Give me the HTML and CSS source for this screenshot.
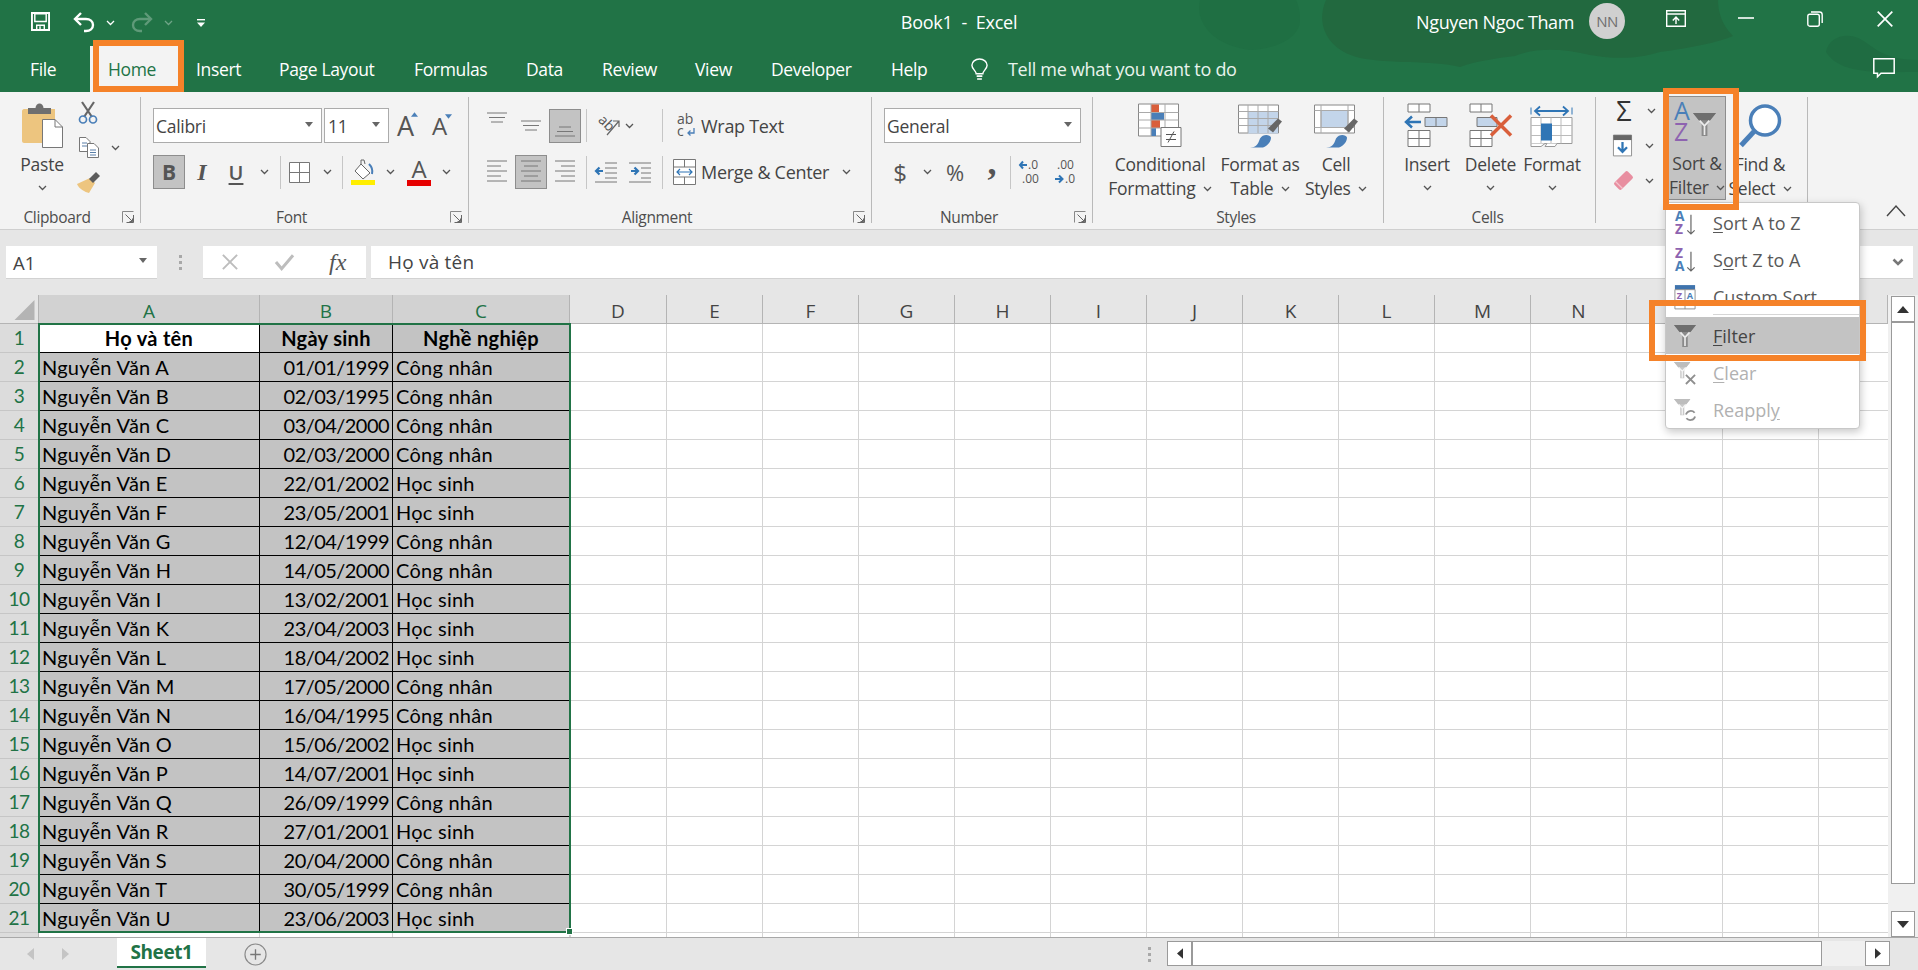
FILE: index.html
```html
<!DOCTYPE html>
<html lang="vi">
<head>
<meta charset="utf-8">
<title>Book1 - Excel</title>
<link rel="stylesheet" href="styles.css">
</head>
<body>
<svg class="defs" width="0" height="0">
  <symbol id="chev" viewBox="0 0 9 6"><path d="M1 1l3.500 3.500L8 1" fill="none" stroke="#555" stroke-width="1.300"/></symbol>
  <symbol id="launch" viewBox="0 0 12 12"><path d="M.5 11.500V.5h11" fill="none" stroke="#888"/><path d="M11.500 4v7.500H4.500M3.500 3.500l7 7M7.500 10.500h3v-3" fill="none" stroke="#666"/></symbol>
  <symbol id="drop" viewBox="0 0 10 6"><path d="M1 0h8L5 5z" fill="#666"/></symbol>
  <symbol id="funnel" viewBox="0 0 24 24"><path d="M0 0h24L15 11v13H9V11z" fill="#8a8a8a"/><path d="M0 0h24l-6 7.500H6z" fill="#6e6e6e"/><path d="M7 8l5 5.500M17 8l-5 5.500V23" fill="none" stroke="#ececec" stroke-width="1.800"/></symbol>
</svg>

<div class="app">
  <header class="titlebar">
    <svg class="blobs" viewBox="0 0 768 92"><path d="M50 0C45 20 60 45 100 50c20 0 50-10 50-30 0-10-2-15-4-20z" fill="#1f6f43"/><path d="M676 52c2-14 19-20 32-14 14 6 22 22 60 22v12c-38 0-78 3-92-20z" fill="#1f6c42"/><path d="M176 0C165 25 178 50 210 58c30 6 70 2 100 9 20-7 40-9 55-11 20-8 45-8 75-1 30 5 50 3 70-3 30-4 60-10 73-16-11-11-15-24-15-36z" fill="#22693f"/></svg>
    <div class="qat-row">
      <div class="qat">
        <svg class="i-save" viewBox="0 0 20 20"><path d="M1 1h18v18H1z" fill="none" stroke="#fff" stroke-width="2"/><path d="M4 2h12v8H4z" fill="none" stroke="#fff" stroke-width="1.500"/><path d="M6 19v-5h8v5M9.500 15v4" fill="none" stroke="#fff" stroke-width="1.500"/></svg>
        <svg class="i-undo" viewBox="0 0 22 20"><path d="M8 1L2 7l6 6" fill="none" stroke="#fff" stroke-width="2.400"/><path d="M3 7h10c4 0 7 2.500 7 6s-3 6-7 6h-2" fill="none" stroke="#fff" stroke-width="2.400"/></svg>
        <svg class="chev c-undo"><use href="#chev"/></svg>
        <svg class="i-redo" viewBox="0 0 22 20"><path d="M14 1l6 6-6 6" fill="none" stroke="#5f9a79" stroke-width="2.400"/><path d="M19 7H9c-4 0-7 2.500-7 6s3 6 7 6h2" fill="none" stroke="#5f9a79" stroke-width="2.400"/></svg>
        <svg class="chev c-redo dim"><use href="#chev"/></svg>
        <svg class="i-more" viewBox="0 0 10 9"><path d="M1 .7h8" stroke="#fff" stroke-width="1.400"/><path d="M1 3.500h8L5 8z" fill="#fff"/></svg>
      </div>
      <div class="doc-title">Book1 &nbsp;-&nbsp; Excel</div>
      <div class="win">
        <span class="user">Nguyen Ngoc Tham</span>
        <span class="avatar">NN</span>
        <svg class="i-display" viewBox="0 0 20 17"><path d="M.7.700h18.600v15.600H.7zM.7 4h18.600" fill="none" stroke="#fff" stroke-width="1.400"/><path d="M10 14V7.500M6.800 10.500L10 7l3.200 3.500" fill="none" stroke="#fff" stroke-width="1.400"/></svg>
        <svg class="i-min" viewBox="0 0 16 2"><path d="M0 1h16" stroke="#fff" stroke-width="1.600"/></svg>
        <svg class="i-restore" viewBox="0 0 16 16"><rect x=".8" y="3.200" width="11.500" height="12" rx="2" fill="none" stroke="#fff" stroke-width="1.400"/><path d="M4 1h8.500c1.500 0 2.700 1.200 2.700 2.700V12" fill="none" stroke="#fff" stroke-width="1.400"/></svg>
        <svg class="i-close" viewBox="0 0 16 16"><path d="M.7.700l14.600 14.600M15.300.7L.7 15.300" stroke="#fff" stroke-width="1.700"/></svg>
      </div>
    </div>
    <nav class="tabs-row">
      <span class="tab">File</span>
      <span class="tab active">Home</span>
      <span class="tab">Insert</span>
      <span class="tab">Page Layout</span>
      <span class="tab">Formulas</span>
      <span class="tab">Data</span>
      <span class="tab">Review</span>
      <span class="tab">View</span>
      <span class="tab">Developer</span>
      <span class="tab">Help</span>
      <svg class="i-bulb" viewBox="0 0 20 24"><path d="M6.500 16.500c0-3-4.500-5-4.500-9C2 4 5.500 1 10 1s8 3 8 6.500c0 4-4.500 6-4.500 9z" fill="none" stroke="#fff" stroke-width="1.500"/><path d="M7 19h6M7.500 22h5" stroke="#fff" stroke-width="1.800"/></svg>
      <span class="tell">Tell me what you want to do</span>
      <svg class="i-comment" viewBox="0 0 22 20"><path d="M.8.800h20.400v14.400H8l-3.500 3.500v-3.500H.8z" fill="none" stroke="#fff" stroke-width="1.500"/></svg>
    </nav>
  </header>

  <section class="ribbon">
    <div class="group">
      <div class="body clip">
        <div class="big paste">
          <svg class="i-paste" viewBox="0 0 41 45"><path d="M2 6h31v34H2c-1 0-2-1-2-2V8c0-1 1-2 2-2z" fill="#edc57f"/><path d="M6 11V5h7.500c0-2.500 2-4.500 4-4.500s4 2 4 4.500H29v6z" fill="#6f6f6f"/><path d="M20.500 16.500H33l7.500 7.500v20.500h-20z" fill="#fff" stroke="#777"/><path d="M33 16.500V24h7.500" fill="none" stroke="#777"/></svg>
          <span>Paste</span>
          <svg class="chev"><use href="#chev"/></svg>
        </div>
        <div class="clip-tools">
          <div class="tool"><svg class="i-cut" viewBox="0 0 20 22"><path d="M4 0l10 15M16 0L6 15" stroke="#666" stroke-width="2.200" fill="none"/><circle cx="5" cy="17.500" r="3.500" fill="none" stroke="#4a7fb8" stroke-width="1.700"/><circle cx="15" cy="17.500" r="3.500" fill="none" stroke="#4a7fb8" stroke-width="1.700"/></svg></div>
          <div class="tool"><svg class="i-copy" viewBox="0 0 20 21"><path d="M.5.500h6.500l4 4v10H.5z" fill="#fff" stroke="#777"/><path d="M8.500 6.500h6.500l4.500 4.500v9.500h-11z" fill="#fff" stroke="#777"/><path d="M3 6h5M3 9h5M11 13h6M11 15.500h6M11 18h6" stroke="#5a7fa8"/></svg><svg class="chev c-copy"><use href="#chev"/></svg></div>
          <div class="tool"><svg class="i-brush" viewBox="0 0 23 22"><path d="M13 6l5 5-6 10C8 20 2 17 0 12z" fill="#edc57f"/><path d="M12 7l7-7 4 4-7 7z" fill="#5c5c5c"/></svg></div>
        </div>
      </div>
      <div class="foot launcher"><span class="label">Clipboard</span><svg class="launch"><use href="#launch"/></svg></div>
    </div>

    <div class="group">
      <div class="body">
        <div class="row r1 pad">
          <div class="select w-font"><span>Calibri</span><svg class="drop"><use href="#drop"/></svg></div>
          <div class="select w-size"><span>11</span><svg class="drop"><use href="#drop"/></svg></div>
          <span class="fa grow">A<svg viewBox="0 0 8 5"><path d="M0 5h8L4 0z" fill="#4a7fb8"/></svg></span>
          <span class="fa shrink">A<svg viewBox="0 0 8 5"><path d="M0 0h8L4 5z" fill="#4a7fb8"/></svg></span>
        </div>
        <div class="row r2 pad">
          <span class="btn on b">B</span>
          <span class="btn i">I</span>
          <span class="btn u">U</span>
          <span class="cbox w22"><svg class="chev"><use href="#chev"/></svg></span>
          <span class="sep ml5"></span>
          <svg class="i-border ml8" viewBox="0 0 21 21"><path d="M.5.500h20v20H.5zM10.500.500v20M.5 10.500h20" fill="#fff" stroke="#777"/></svg>
          <span class="cbox w22 ml6"><svg class="chev"><use href="#chev"/></svg></span>
          <span class="sep ml4"></span>
          <svg class="i-fill ml8" viewBox="0 0 24 26"><path d="M10 5l9 9-7 6-8-8z" fill="#fff" stroke="#666"/><path d="M10 5V1l3 0 1 4" fill="none" stroke="#666"/><path d="M18 5c3 3 4 6 3 10" fill="none" stroke="#4a7fb8" stroke-width="2"/><path d="M0 21h24v5H0z" fill="#ffee00"/></svg>
          <span class="cbox w22 ml4"><svg class="chev"><use href="#chev"/></svg></span>
          <span class="fcolor ml6">A</span>
          <span class="cbox w22 ml4"><svg class="chev"><use href="#chev"/></svg></span>
        </div>
      </div>
      <div class="foot launcher"><span class="label">Font</span><svg class="launch"><use href="#launch"/></svg></div>
    </div>

    <div class="group">
      <div class="body">
        <div class="row r1 pad">
          <span class="abox"><svg viewBox="0 0 22 16" class="i-al up"><path d="M1 1h20M3 5.500h16M5 10h12" stroke="#777"/></svg></span>
          <span class="abox"><svg viewBox="0 0 22 16" class="i-al"><path d="M1 3h20M3 7.500h16M5 12h12" stroke="#777"/></svg></span>
          <span class="abox on"><svg viewBox="0 0 22 16" class="i-al down"><path d="M5 5h12M3 9.500h16M1 14h20" stroke="#777"/></svg></span>
          <span class="sep ml5"></span>
          <svg class="i-orient ml9" viewBox="0 0 26 26"><text x="1" y="15" transform="rotate(45 10 12)" class="mini-text">ab</text><path d="M11 22L23 8M17 8h6v6" fill="none" stroke="#666" stroke-width="1.200"/></svg>
          <span class="cbox w14"><svg class="chev"><use href="#chev"/></svg></span>
          <span class="sep ml26"></span>
          <svg class="i-wrap ml14" viewBox="0 0 18 26"><text x="0" y="11" class="mini-text">ab</text><text x="0" y="23" class="mini-text">c</text><path d="M17 15v5h-6M13.500 17.500L11 20l2.500 2.500" fill="none" stroke="#4a7fb8" stroke-width="1.300"/></svg>
          <span class="txt ml6">Wrap Text</span>
        </div>
        <div class="row r2 pad">
          <span class="abox"><svg viewBox="0 0 22 26" class="i-alh"><path d="M1 2h20M1 7h14M1 12h20M1 17h14M1 22h20" stroke="#777"/></svg></span>
          <span class="abox on"><svg viewBox="0 0 22 26" class="i-alh"><path d="M1 2h20M4 7h14M1 12h20M4 17h14M1 22h20" stroke="#777"/></svg></span>
          <span class="abox"><svg viewBox="0 0 22 26" class="i-alh"><path d="M1 2h20M7 7h14M1 12h20M7 17h14M1 22h20" stroke="#777"/></svg></span>
          <span class="sep ml5"></span>
          <svg class="i-indent ml8" viewBox="0 0 22 24"><path d="M10 3h12M10 8h12M10 13h12M10 18h12M0 22h22" stroke="#777"/><path d="M8 11H1M4.500 7.500L1 11l3.500 3.500" fill="none" stroke="#2f75b5" stroke-width="2.200"/></svg>
          <svg class="i-indent ml12" viewBox="0 0 22 24"><path d="M0 3h22M12 8h10M12 13h10M12 18h10M0 22h22" stroke="#777"/><path d="M2 11h7M5.500 7.500L9 11l-3.500 3.500" fill="none" stroke="#2f75b5" stroke-width="2.200"/></svg>
          <span class="sep ml11"></span>
          <svg class="i-merge ml10" viewBox="0 0 23 26"><path d="M.5.500h22v25H.5zM.5 8h22M.5 18h22M11.500.500V8M11.500 18v7.500" fill="#fff" stroke="#777"/><path d="M4 13h15M7 10l-3 3 3 3M16 10l3 3-3 3" fill="none" stroke="#2f75b5" stroke-width="1.200"/></svg>
          <span class="txt w-merge ml5">Merge &amp; Center</span>
          <span class="cbox w14"><svg class="chev"><use href="#chev"/></svg></span>
        </div>
      </div>
      <div class="foot launcher"><span class="label">Alignment</span><svg class="launch"><use href="#launch"/></svg></div>
    </div>

    <div class="group">
      <div class="body">
        <div class="row r1 pad">
          <div class="select w-fmt"><span>General</span><svg class="drop"><use href="#drop"/></svg></div>
        </div>
        <div class="row r2 pad">
          <span class="nbtn w32 dollar">$</span>
          <span class="cbox w14 ml4"><svg class="chev"><use href="#chev"/></svg></span>
          <span class="nbtn w34 ml4 pct">%</span>
          <span class="nbtn w28 ml3 comma">,</span>
          <span class="sep ml7"></span>
          <svg class="i-dec ml8" viewBox="0 0 22 26"><text x="9" y="10" class="dec-text">.0</text><text x="3" y="24" class="dec-text">.00</text><path d="M8 6H1M4 2.500L1 6l3 3.500" fill="none" stroke="#2f75b5" stroke-width="2"/></svg>
          <svg class="i-dec ml13" viewBox="0 0 22 26"><text x="3" y="10" class="dec-text">.00</text><text x="11" y="24" class="dec-text">.0</text><path d="M1 20h7M5 16.500L8.500 20 5 23.500" fill="none" stroke="#2f75b5" stroke-width="2"/></svg>
        </div>
      </div>
      <div class="foot launcher"><span class="label">Number</span><svg class="launch"><use href="#launch"/></svg></div>
    </div>

    <div class="group">
      <div class="body flexrow pl15">
        <div class="big w104">
          <svg class="i-big" viewBox="0 0 44 44"><path d="M.5.500h40v32H.5z" fill="#fff" stroke="#888"/><path d="M13 1h8v8h-8z" fill="#d95f3b"/><path d="M13 9h13v7.500H13z" fill="#4a7fb8"/><path d="M13 16.500h9v8h-9z" fill="#d95f3b"/><path d="M13 24.500h5v8h-5z" fill="#4a7fb8"/><path d="M.5 9h40M.5 16.500h40M.5 24.500h40M13 .5v32M27 .5v32" stroke="#aaa" fill="none"/><path d="M23 24h20v19H23z" fill="#fff" stroke="#777"/><path d="M28 31h10M28 36h10M30 39l6-11" stroke="#555" fill="none"/></svg>
          <span>Conditional</span>
          <span>Formatting <svg class="chev inl"><use href="#chev"/></svg></span>
        </div>
        <div class="big w80 ml8">
          <svg class="i-big" viewBox="0 0 44 44"><path d="M.5 1.500h40v28H.5z" fill="#fff" stroke="#888"/><path d="M10 8h30v22H10z" fill="#c3d5ea"/><path d="M.5 8h40M.5 15h40M.5 22h40M10 1.500v28M20 1.500v28M30 1.500v28" stroke="#aaa" fill="none"/><path d="M30 25l10-10 4 3-9 11z" fill="#666"/><path d="M12 44c6 0 8-3 10-9 3-5 10-4 11-1 0 4-3 8-8 10z" fill="#4a7fb8"/></svg>
          <span>Format as</span>
          <span>Table <svg class="chev inl"><use href="#chev"/></svg></span>
        </div>
        <div class="big w64 ml4">
          <svg class="i-big" viewBox="0 0 44 44"><path d="M.5 1.500h40v28H.5z" fill="#fff" stroke="#888"/><path d="M7 7h27v17H7z" fill="#c3d5ea" stroke="#aaa"/><path d="M.5 7h40M.5 24h40M7 1.500v28M34 1.500v28" stroke="#aaa" fill="none"/><path d="M30 25l10-10 4 3-9 11z" fill="#666"/><path d="M12 44c6 0 8-3 10-9 3-5 10-4 11-1 0 4-3 8-8 10z" fill="#4a7fb8"/></svg>
          <span>Cell</span>
          <span>Styles <svg class="chev inl"><use href="#chev"/></svg></span>
        </div>
      </div>
      <div class="foot"><span class="label">Styles</span></div>
    </div>

    <div class="group">
      <div class="body flexrow pl12">
        <div class="big w62">
          <svg class="i-big" viewBox="0 0 44 44"><path d="M3 .5h22v8H3zM14 .5v8M3 27h22v16H3zM14 27v16M3 35h22" fill="#fff" stroke="#777"/><path d="M20 14h22v9H20zM31 14v9" fill="#c3d5ea" stroke="#777"/><path d="M16 18.500H1M7 13L1 18.500 7 24" fill="none" stroke="#2f75b5" stroke-width="2.500"/></svg>
          <span>Insert</span>
          <svg class="chev"><use href="#chev"/></svg>
        </div>
        <div class="big w61 ml2">
          <svg class="i-big" viewBox="0 0 44 44"><path d="M1 .5h22v8H1zM12 .5v8M1 27h22v16H1zM12 27v16M1 35h22" fill="#fff" stroke="#777"/><path d="M8 14h20v9H8z" fill="#c3d5ea" stroke="#777"/><path d="M22 12l20 20M42 12L22 32" stroke="#d95f3b" stroke-width="3.500"/></svg>
          <span>Delete</span>
          <svg class="chev"><use href="#chev"/></svg>
        </div>
        <div class="big w62">
          <svg class="i-big" viewBox="0 0 44 44"><path d="M1 4v7M42 4v7" stroke="#2f75b5"/><path d="M5 7.500h33M10 3L5 7.500 10 12M33 3l5 4.500-5 4.500" fill="none" stroke="#2f75b5" stroke-width="1.800"/><path d="M1 14h41v26H1z" fill="#fff" stroke="#999"/><path d="M11 14v26M31 14v26M1 22h41M1 32h41M21 14v26" stroke="#bbb"/><path d="M11 20h11v17H11z" fill="#2f75b5"/><path d="M1 40v3h10l4-3M17 40l-2 3h10l2-3" fill="#fff" stroke="#999"/></svg>
          <span>Format</span>
          <svg class="chev"><use href="#chev"/></svg>
        </div>
      </div>
      <div class="foot"><span class="label">Cells</span></div>
    </div>

    <div class="group">
      <div class="body flexrow pl17">
        <div class="edit-tools">
          <div class="etool"><span class="sigma">Σ</span><svg class="chev c-e1"><use href="#chev"/></svg></div>
          <div class="etool"><svg class="i-filld" viewBox="0 0 21 24"><path d="M.5.500h20v23H.5z" fill="#fff" stroke="#888"/><path d="M.5.500h20V6H.5z" fill="#666"/><path d="M10.500 8v11M5.500 14l5 5 5-5" fill="none" stroke="#2f75b5" stroke-width="2.500"/></svg><svg class="chev c-e2"><use href="#chev"/></svg></div>
          <div class="etool"><svg class="i-eraser" viewBox="0 0 21 21"><rect x="1" y="5.500" width="19" height="10" rx="2" transform="rotate(-45 10.500 10.500)" fill="#e88ea0"/><path d="M2.500 11.500l7 7" stroke="#f3c3cd" stroke-width="1.200"/></svg><svg class="chev c-e3"><use href="#chev"/></svg></div>
        </div>
        <div class="big sort">
          <svg class="i-sort" viewBox="0 0 48 45"><text x="1" y="18" class="az a-blue">A</text><text x="1" y="39" class="az a-purple">Z</text><use href="#funnel" x="20" y="11" width="23" height="23"/></svg>
          <span>Sort &amp;</span>
          <span>Filter <svg class="chev inl"><use href="#chev"/></svg></span>
        </div>
        <div class="big w60 ml4">
          <svg class="i-big" viewBox="0 0 44 44"><circle cx="27" cy="17" r="14.500" fill="#fff" stroke="#4a7fb8" stroke-width="3.500"/><path d="M16 28L3 42" stroke="#4a7fb8" stroke-width="5"/></svg>
          <span>Find &amp;</span>
          <span>Select <svg class="chev inl"><use href="#chev"/></svg></span>
        </div>
      </div>
    </div>

    <div class="collapse">
      <svg viewBox="0 0 20 12"><path d="M1 11L10 1l9 10" fill="none" stroke="#444" stroke-width="1.400"/></svg>
    </div>
  </section>

  <section class="formula">
    <div class="namebox"><span>A1</span><svg class="drop"><use href="#drop"/></svg></div>
    <div class="fdots"><i></i><i></i><i></i></div>
    <div class="fbtns">
      <svg viewBox="0 0 18 18" class="fx-x"><path d="M1 1l16 16M17 1L1 17" stroke="#bdbdbd" stroke-width="2.200"/></svg>
      <svg viewBox="0 0 20 18" class="fx-c"><path d="M1 9l6 7L19 2" fill="none" stroke="#bdbdbd" stroke-width="3.200"/></svg>
      <span class="fx">fx</span>
    </div>
    <div class="finput"><span>Họ và tên</span><svg viewBox="0 0 12 9" class="f-chev"><path d="M1.500 1.500l4.500 4.500 4.500-4.500" fill="none" stroke="#777" stroke-width="2.600"/></svg></div>
  </section>

  <section class="sheet">
    <div class="grid">
      <div class="corner"><svg viewBox="0 0 20 20"><path d="M20 0v20H0z" fill="#b4b4b4"/></svg></div>
      <div class="ch sel">A</div><div class="ch sel">B</div><div class="ch sel">C</div>
      <div class="ch">D</div><div class="ch">E</div><div class="ch">F</div><div class="ch">G</div><div class="ch">H</div><div class="ch">I</div><div class="ch">J</div><div class="ch">K</div><div class="ch">L</div><div class="ch">M</div><div class="ch">N</div><div class="ch">O</div><div class="ch">P</div><div class="ch">Q</div>

      <div class="blank"></div>

      <div class="rh">1</div><div class="cell hd first">Họ và tên</div><div class="cell hd">Ngày sinh</div><div class="cell hd">Nghề nghiệp</div>
      <div class="rh">2</div><div class="cell">Nguyễn Văn A</div><div class="cell num">01/01/1999</div><div class="cell">Công nhân</div>
      <div class="rh">3</div><div class="cell">Nguyễn Văn B</div><div class="cell num">02/03/1995</div><div class="cell">Công nhân</div>
      <div class="rh">4</div><div class="cell">Nguyễn Văn C</div><div class="cell num">03/04/2000</div><div class="cell">Công nhân</div>
      <div class="rh">5</div><div class="cell">Nguyễn Văn D</div><div class="cell num">02/03/2000</div><div class="cell">Công nhân</div>
      <div class="rh">6</div><div class="cell">Nguyễn Văn E</div><div class="cell num">22/01/2002</div><div class="cell">Học sinh</div>
      <div class="rh">7</div><div class="cell">Nguyễn Văn F</div><div class="cell num">23/05/2001</div><div class="cell">Học sinh</div>
      <div class="rh">8</div><div class="cell">Nguyễn Văn G</div><div class="cell num">12/04/1999</div><div class="cell">Công nhân</div>
      <div class="rh">9</div><div class="cell">Nguyễn Văn H</div><div class="cell num">14/05/2000</div><div class="cell">Công nhân</div>
      <div class="rh">10</div><div class="cell">Nguyễn Văn I</div><div class="cell num">13/02/2001</div><div class="cell">Học sinh</div>
      <div class="rh">11</div><div class="cell">Nguyễn Văn K</div><div class="cell num">23/04/2003</div><div class="cell">Học sinh</div>
      <div class="rh">12</div><div class="cell">Nguyễn Văn L</div><div class="cell num">18/04/2002</div><div class="cell">Học sinh</div>
      <div class="rh">13</div><div class="cell">Nguyễn Văn M</div><div class="cell num">17/05/2000</div><div class="cell">Công nhân</div>
      <div class="rh">14</div><div class="cell">Nguyễn Văn N</div><div class="cell num">16/04/1995</div><div class="cell">Công nhân</div>
      <div class="rh">15</div><div class="cell">Nguyễn Văn O</div><div class="cell num">15/06/2002</div><div class="cell">Học sinh</div>
      <div class="rh">16</div><div class="cell">Nguyễn Văn P</div><div class="cell num">14/07/2001</div><div class="cell">Học sinh</div>
      <div class="rh">17</div><div class="cell">Nguyễn Văn Q</div><div class="cell num">26/09/1999</div><div class="cell">Công nhân</div>
      <div class="rh">18</div><div class="cell">Nguyễn Văn R</div><div class="cell num">27/01/2001</div><div class="cell">Học sinh</div>
      <div class="rh">19</div><div class="cell">Nguyễn Văn S</div><div class="cell num">20/04/2000</div><div class="cell">Công nhân</div>
      <div class="rh">20</div><div class="cell">Nguyễn Văn T</div><div class="cell num">30/05/1999</div><div class="cell">Công nhân</div>
      <div class="rh">21</div><div class="cell">Nguyễn Văn U</div><div class="cell num">23/06/2003</div><div class="cell">Học sinh</div>
      <div class="rh"></div><div class="empty"></div><div class="empty"></div><div class="empty"></div>

      <div class="selection"><i></i></div>
    </div>
    <div class="vscroll">
      <div class="sb-btn"><svg viewBox="0 0 12 7"><path d="M0 7h12L6 0z" fill="#333"/></svg></div>
      <div class="sb-thumb"></div>
      <div class="sb-track"></div>
      <div class="sb-btn"><svg viewBox="0 0 12 7"><path d="M0 0h12L6 7z" fill="#333"/></svg></div>
    </div>
  </section>

  <footer class="bottom">
    <svg class="nav-l" viewBox="0 0 7 12"><path d="M7 0v12L0 6z" fill="#c4c4c4"/></svg>
    <svg class="nav-r" viewBox="0 0 7 12"><path d="M0 0v12l7-6z" fill="#c4c4c4"/></svg>
    <div class="sheet-tab">Sheet1</div>
    <svg class="add" viewBox="0 0 24 24"><circle cx="12" cy="12" r="11" fill="none" stroke="#8a8a8a" stroke-width="1.200"/><path d="M12 6.500v11M6.500 12h11" stroke="#777" stroke-width="1.400"/></svg>
    <div class="hdots"><i></i><i></i><i></i></div>
    <div class="hscroll">
      <div class="hb"><svg viewBox="0 0 7 12"><path d="M7 0v12L0 6z" fill="#333"/></svg></div>
      <div class="hthumb"></div>
      <div class="htrack"></div>
      <div class="hb"><svg viewBox="0 0 7 12"><path d="M0 0v12l7-6z" fill="#333"/></svg></div>
    </div>
  </footer>

  <div class="menu">
    <div class="mi"><svg class="mic" viewBox="0 0 24 26"><text x="1" y="11" class="mt a-blue">A</text><text x="1" y="25" class="mt a-purple">Z</text><path d="M18.500 4v21M14.500 21l4 4 4-4" fill="none" stroke="#666" stroke-width="1.300"/></svg><span><u>S</u>ort A to Z</span></div>
    <div class="mi"><svg class="mic" viewBox="0 0 24 26"><text x="1" y="11" class="mt a-purple">Z</text><text x="1" y="25" class="mt a-blue">A</text><path d="M18.500 4v21M14.500 21l4 4 4-4" fill="none" stroke="#666" stroke-width="1.300"/></svg><span>S<u>o</u>rt Z to A</span></div>
    <div class="mi"><svg class="mic" viewBox="0 0 24 26"><path d="M1 0h22v5H1z" fill="#3f74ad"/><path d="M1 5h22v21H1zM12 5v21" fill="#fff" stroke="#8a8a8a"/><text x="3" y="15" class="mt2 a-purple">Z</text><text x="14" y="15" class="mt2 a-blue">A</text></svg><span>Custom Sort</span></div>
    <div class="msep"></div>
    <div class="mi hot"><svg class="mic" viewBox="0 0 24 24"><use href="#funnel"/></svg><span><u>F</u>ilter</span></div>
    <div class="mi off"><svg class="mic" viewBox="0 0 24 24"><g opacity=".45"><use href="#funnel" width="18" height="18"/></g><path d="M13 14l10 10M23 14L13 24" stroke="#8f8f8f" stroke-width="2"/></svg><span><u>C</u>lear</span></div>
    <div class="mi off"><svg class="mic" viewBox="0 0 24 24"><g opacity=".45"><use href="#funnel" width="18" height="18"/></g><path d="M13 17a5.500 5.500 0 0 1 9.500-2M23 19a5.500 5.500 0 0 1-9.500 2" fill="none" stroke="#8f8f8f" stroke-width="2"/></svg><span>Reappl<u>y</u></span></div>
  </div>

  <div class="mark m-home"></div>
  <div class="mark m-sort"></div>
  <div class="mark m-filter"></div>
</div>
</body>
</html>
```
FILE: styles.css
```css
* { box-sizing: border-box; }
html, body { margin: 0; padding: 0; }
body { width: 1918px; height: 970px; overflow: hidden; font-family: "Open Sans", "Noto Sans", sans-serif; color: #444; background: #e6e6e6; }
.defs { position: absolute; }
svg { display: block; flex: none; overflow: visible; }
.app { position: relative; width: 1918px; height: 970px; display: flex; flex-direction: column; }

/* title bar */
.titlebar { position: relative; height: 92px; background: #217346; color: #fff; flex: none; }
.blobs { position: absolute; left: 1150px; top: 0; width: 768px; height: 92px; overflow: hidden; }
.qat-row { position: relative; height: 46px; display: grid; grid-template-columns: 1fr auto 1fr; align-items: center; }
.qat { display: flex; align-items: center; padding-left: 31px; }
.i-save { width: 19px; height: 19px; margin-top: -4px; }
.i-undo { width: 22px; height: 20px; margin-left: 23px; margin-top: -3px; }
.chev { width: 9px; height: 6px; }
.chev.inl { display: inline-block; margin-left: 3px; vertical-align: 3px; }
.titlebar .chev { filter: brightness(3); }
.c-undo { margin-left: 11px; }
.i-redo { width: 22px; height: 20px; margin-left: 16px; margin-top: -3px; }
.titlebar .chev.dim { opacity: .35; }
.c-redo { margin-left: 11px; }
.i-more { width: 10px; height: 9px; margin-left: 23px; }
.doc-title { font-size: 18px; letter-spacing: -.25px; margin-top: -3px; }
.win { display: flex; align-items: center; justify-content: flex-end; }
.user { font-size: 18px; letter-spacing: -.4px; margin-top: -3px; }
.avatar { width: 36px; height: 36px; border-radius: 50%; background: #d0d0d0; color: #6e6e6e; font-size: 15px; letter-spacing: -.5px; display: flex; align-items: center; justify-content: center; margin-left: 15px; margin-top: -4px; }
.i-display { width: 20px; height: 17px; margin-left: 41px; margin-top: -9px; }
.i-min { width: 16px; height: 2px; margin-left: 52px; margin-top: -11px; }
.i-restore { width: 16px; height: 16px; margin-left: 53px; margin-top: -9px; }
.i-close { width: 16px; height: 16px; margin-left: 54px; margin-right: 25px; margin-top: -9px; }

.tabs-row { position: relative; height: 46px; display: grid; grid-template-columns: 12px 78px 88px 83px 135px 112px 76px 93px 76px 120px 89px 8px 19px 19px 240px 1fr; align-items: center; }
.tab { font-size: 17.500px; letter-spacing: -.35px; padding-left: 18px; color: #fff; line-height: 46px; white-space: nowrap; }
.tab:first-child { grid-column: 2; }
.tab.active { background: #f3f3f3; color: #217346; height: 46px; }
.i-bulb { grid-column: 13; width: 19px; height: 23px; }
.tell { grid-column: 15; font-size: 18px; letter-spacing: -.3px; white-space: nowrap; color: #e9f3ed; }
.i-comment { grid-column: 16; justify-self: end; width: 22px; height: 20px; margin-right: 23px; margin-top: -2px; }

/* ribbon */
.ribbon { height: 138px; flex: none; background: #f3f3f3; border-bottom: 1px solid #cfcfcf; padding-top: 5px; display: grid; grid-template-columns: 141px 328px 403px 221px 291px 212px 212px 1fr; }
.group { height: 126px; border-right: 1px solid #b9b9b9; display: grid; grid-template-rows: 109px 17px; }
.body { min-width: 0; }
.flexrow { display: flex; }
.pl12 { padding-left: 12px; } .pl15 { padding-left: 15px; } .pl17 { padding-left: 17px; }
.foot { display: grid; grid-template-columns: 1fr 4px; }
.foot.launcher { grid-template-columns: 1fr 26px; }
.label { text-align: center; font-size: 15.500px; letter-spacing: -.35px; line-height: 22px; color: #4d4d4d; }
.launch { width: 12px; height: 12px; margin: 5px 0 0 8px; }

.big { display: flex; flex-direction: column; align-items: center; padding-top: 6px; font-size: 17.500px; letter-spacing: -.25px; line-height: 24px; color: #444; white-space: nowrap; }
.big > svg:first-child { margin-bottom: 4px; }
.big > .chev { margin-top: 9px; }
.w104 { width: 104px; } .w80 { width: 80px; } .w64 { width: 64px; } .w62 { width: 62px; } .w61 { width: 61px; } .w60 { width: 60px; }
.i-big { width: 44px; height: 45px; }
.clip { display: flex; padding-left: 12px; }
.paste { width: 60px; }
.i-paste { width: 41px; height: 45px; }
.clip-tools { margin-left: 5px; margin-top: -2px; }
.tool { height: 35px; display: flex; align-items: center; }
.i-cut { width: 20px; height: 22px; margin-left: 1px; }
.i-copy { width: 20px; height: 21px; margin-left: 2px; }
.c-copy { margin-left: 12px; }
.i-brush { width: 23px; height: 22px; }

.row { display: flex; align-items: center; }
.r1 { height: 35px; margin-top: 11px; }
.r2 { height: 34px; margin-top: 12px; }
.pad { padding-left: 12px; }
.select { height: 35px; background: #fff; border: 1px solid #ababab; display: flex; align-items: center; justify-content: space-between; padding: 0 7px 0 2px; font-size: 17.500px; letter-spacing: -.3px; color: #444; }
.drop { width: 10px; height: 6px; margin-top: -2px; }
.w-font { width: 169px; margin-right: 2px; }
.w-size { width: 65px; padding-left: 3px; }
.w-fmt { width: 197px; }
.fa { position: relative; color: #555; font-weight: 400; line-height: 1; }
.fa svg { position: absolute; width: 7px; height: 5px; top: 0; }
.grow { font-size: 27px; margin-left: 8px; width: 20px; }
.grow svg { left: 14px; }
.shrink { font-size: 24px; margin-left: 15px; width: 18px; }
.shrink svg { left: 13px; }
.btn { width: 34px; height: 34px; display: flex; align-items: center; justify-content: center; font-size: 20px; color: #555; }
.btn.on { width: 32px; background: #c3c3c3; border: 1px solid #8d8d8d; }
.btn.b { font-weight: 700; font-size: 21px; }
.btn.i { font-style: italic; font-family: "Liberation Serif", serif; font-weight: 700; font-size: 24px; }
.btn.u { text-decoration: underline; text-underline-offset: 3px; font-weight: 600; }
.cbox { display: flex; align-items: center; justify-content: center; height: 34px; }
.w22 { width: 22px; } .w14 { width: 14px; }
.sep { width: 1px; height: 33px; background: #c6c6c6; flex: none; }
.ml2 { margin-left: 2px; } .ml3 { margin-left: 3px; } .ml4 { margin-left: 4px; } .ml5 { margin-left: 5px; } .ml6 { margin-left: 6px; } .ml7 { margin-left: 7px; } .ml8 { margin-left: 8px; } .ml9 { margin-left: 9px; } .ml10 { margin-left: 10px; } .ml11 { margin-left: 11px; } .ml12 { margin-left: 12px; } .ml13 { margin-left: 13px; } .ml14 { margin-left: 14px; } .ml26 { margin-left: 26px; }
.i-border { width: 21px; height: 21px; }
.i-fill { width: 24px; height: 26px; }
.fcolor { width: 24px; height: 28px; font-size: 24px; line-height: 22px; text-align: center; color: #555; border-bottom: 6px solid #e60000; }
.abox { width: 32px; height: 34px; margin-right: 2px; display: flex; align-items: center; justify-content: center; }
.abox.on { background: #c3c3c3; border: 1px solid #8d8d8d; }
.abox:nth-of-type(3) { margin-right: 0; }
.i-al { width: 22px; height: 16px; }
.i-al.up { margin-top: -12px; }
.i-al.down { margin-top: 8px; }
.i-alh { width: 22px; height: 26px; }
.i-orient { width: 26px; height: 26px; }
.mini-text { font-family: "Open Sans", sans-serif; font-size: 14px; fill: #555; }
.i-wrap { width: 18px; height: 26px; }
.txt { font-size: 18px; letter-spacing: -.3px; color: #444; white-space: nowrap; }
.w-merge { width: 138px; }
.i-indent { width: 22px; height: 24px; }
.i-merge { width: 23px; height: 26px; }
.nbtn { height: 34px; display: flex; align-items: center; justify-content: center; color: #555; }
.w32 { width: 32px; } .w34 { width: 34px; } .w28 { width: 28px; }
.dollar { font-size: 24px; }
.pct { font-size: 22px; }
.comma { font-family: "Liberation Serif", serif; font-weight: 700; font-size: 36px; line-height: 20px; padding: 0 0 20px 6px; }
.i-dec { width: 22px; height: 26px; }
.dec-text { font-family: "Open Sans", sans-serif; font-size: 12px; fill: #555; }

.edit-tools { width: 55px; margin-top: -4px; }
.etool { height: 35px; display: flex; align-items: center; }
.sigma { font-size: 27px; color: #333; width: 22px; text-align: center; line-height: 1; }
.c-e1 { margin-left: 12px; }
.i-filld { width: 19px; height: 23px; }
.c-e2 { margin-left: 13px; }
.i-eraser { width: 21px; height: 21px; }
.c-e3 { margin-left: 11px; }
.sort { width: 58px; height: 104px; margin-top: -1px; background: #c3c3c3; border: 1px solid #8d8d8d; padding-top: 5px; }
.i-sort { width: 48px; height: 45px; }
.az { font-family: "Open Sans", sans-serif; font-size: 25px; }
.a-blue { fill: #4a7fb8; } .a-purple { fill: #8e63b0; }
.collapse { display: flex; align-items: flex-end; justify-content: flex-end; padding: 0 12px 6px 0; height: 126px; }
.collapse svg { width: 20px; height: 12px; }

/* formula bar */
.formula { height: 65px; flex: none; background: #e6e6e6; display: flex; padding: 16px 5px 16px 6px; }
.namebox, .fbtns, .finput { height: 33px; background: #fff; border-bottom: 1px solid #d2d2d2; }
.namebox { width: 151px; display: flex; align-items: center; justify-content: space-between; padding: 0 9px 0 7px; font-size: 18.500px; color: #444; }
.fdots { width: 46px; display: flex; flex-direction: column; align-items: center; justify-content: center; gap: 3px; }
.fdots i, .hdots i { display: block; width: 3px; height: 3px; background: #a8a8a8; }
.fbtns { width: 163px; display: flex; align-items: center; }
.fx-x { width: 16px; height: 16px; margin-left: 19px; }
.fx-c { width: 19px; height: 18px; margin-left: 37px; }
.fx { font-family: "Liberation Serif", serif; font-style: italic; font-size: 24px; color: #555; margin-left: 35px; }
.finput { flex: 1; margin-left: 5px; padding: 0 6px 0 17px; display: flex; align-items: center; justify-content: space-between; font-size: 19px; letter-spacing: .2px; color: #444; }
.f-chev { width: 12px; height: 9px; margin-right: 3px; }

/* sheet */
.sheet { height: 642px; flex: none; display: flex; }
.grid { position: relative; width: 1888px; height: 642px; overflow: hidden; background: #fff; display: grid; grid-template-columns: 39px 221px 133px 177px 97px repeat(12, 96px) 69px; grid-template-rows: repeat(23, 29px); font-family: Lato, "Noto Sans", sans-serif; color: #000; }
.corner { background: #e6e6e6; border-right: 1px solid #b4b4b4; border-bottom: 1px solid #b4b4b4; padding: 5px 3px 3px 14px; }
.corner svg { width: 21px; height: 20px; }
.ch { background: #e6e6e6; border-right: 1px solid #b4b4b4; border-bottom: 1px solid #b4b4b4; text-align: center; line-height: 32px; font-size: 19px; font-family: "Open Sans", sans-serif; color: #444; overflow: hidden; }
.ch.sel { background: #d2d2d2; color: #217346; }
.rh { grid-column: 1; background: #dcdcdc; border-right: 1px solid #b4b4b4; border-bottom: 1px solid #c6c6c6; color: #217346; text-align: center; line-height: 28px; font-size: 19px; letter-spacing: -.5px; }
.cell { background: #c3c3c3; border-right: 1px solid #000; border-bottom: 1px solid #000; font-size: 20px; letter-spacing: .25px; line-height: 28px; padding-left: 3px; white-space: nowrap; overflow: hidden; }
.cell.hd { font-weight: 700; text-align: center; padding: 0; letter-spacing: .3px; line-height: 29px; }
.cell.first { background: #fff; }
.cell.num { text-align: right; padding-right: 3px; padding-left: 0; letter-spacing: -.55px; }
.blank { grid-column: 5 / -1; grid-row: 2 / -1; background-image: linear-gradient(to right, transparent 95px, #d4d4d4 95px), linear-gradient(to bottom, transparent 28px, #d4d4d4 28px); background-size: 96px 100%, 100% 29px; background-position: 1px 0, 0 0; }
.empty { background: #fff; border-right: 1px solid #d4d4d4; }
.selection { position: absolute; left: 38px; top: 28px; width: 533px; height: 610px; border: 2px solid #217346; pointer-events: none; }
.selection i { position: absolute; right: -4px; bottom: -4px; width: 7px; height: 7px; background: #217346; border: 1px solid #fff; }

.vscroll { flex: 1; background: #f0f0f0; display: flex; flex-direction: column; padding: 1px 3px 0; }
.sb-btn { height: 26px; flex: none; background: #fff; border: 1px solid #9a9a9a; display: flex; align-items: center; justify-content: center; }
.sb-btn svg { width: 12px; height: 7px; }
.sb-thumb { height: 562px; background: #fff; border: 1px solid #9a9a9a; flex: none; }
.sb-track { flex: 1; }

/* bottom */
.bottom { height: 33px; flex: none; background: #e6e6e6; border-top: 1px solid #a8a8a8; display: flex; align-items: flex-start; position: relative; }
.nav-l, .nav-r { width: 7px; height: 12px; margin-top: 10px; }
.nav-l { margin-left: 27px; }
.nav-r { margin-left: 28px; }
.sheet-tab { width: 89px; height: 30px; background: #fff; border-bottom: 2px solid #217346; margin-left: 48px; text-align: center; font-weight: 700; font-size: 19px; letter-spacing: -.4px; color: #217346; line-height: 28px; }
.add { width: 23px; height: 23px; margin-left: 38px; margin-top: 5px; }
.hdots { margin-left: 881px; margin-top: 9px; display: flex; flex-direction: column; gap: 3px; }
.hscroll { display: flex; margin-left: 16px; margin-top: 3px; height: 25px; }
.hb { width: 25px; background: #fff; border: 1px solid #9a9a9a; display: flex; align-items: center; justify-content: center; }
.hb svg { width: 6px; height: 11px; }
.hthumb { width: 630px; background: #fff; border: 1px solid #9a9a9a; }
.htrack { width: 43px; background: #f0f0f0; }

/* dropdown */
.menu { position: absolute; left: 1665px; top: 202px; width: 195px; height: 227px; background: #fff; border: 1px solid #c8c8c8; border-radius: 4px; box-shadow: 1px 3px 8px rgba(0,0,0,.22); padding-top: 1px; z-index: 2; }
.mi { height: 37px; display: flex; align-items: center; padding-left: 8px; font-size: 18px; color: #595959; }
.mi u { text-underline-offset: 2px; }
.mic { width: 22px; height: 24px; margin-right: 17px; }
.msep { height: 1px; margin: -1px 0 2px 47px; background: #d6d6d6; }
.mt { font-family: "Open Sans", sans-serif; font-weight: 700; font-size: 15px; }
.mt2 { font-family: "Open Sans", sans-serif; font-weight: 700; font-size: 10px; }
.hot { background: #c3c3c3; color: #444; }
.off { color: #b1b1b1; }

/* annotation boxes */
.mark { position: absolute; border: 6px solid #f58229; z-index: 3; pointer-events: none; }
.m-home { left: 93px; top: 40px; width: 91px; height: 52px; }
.m-sort { left: 1663px; top: 88px; width: 76px; height: 122px; }
.m-filter { left: 1649px; top: 300px; width: 217px; height: 61px; }
```
